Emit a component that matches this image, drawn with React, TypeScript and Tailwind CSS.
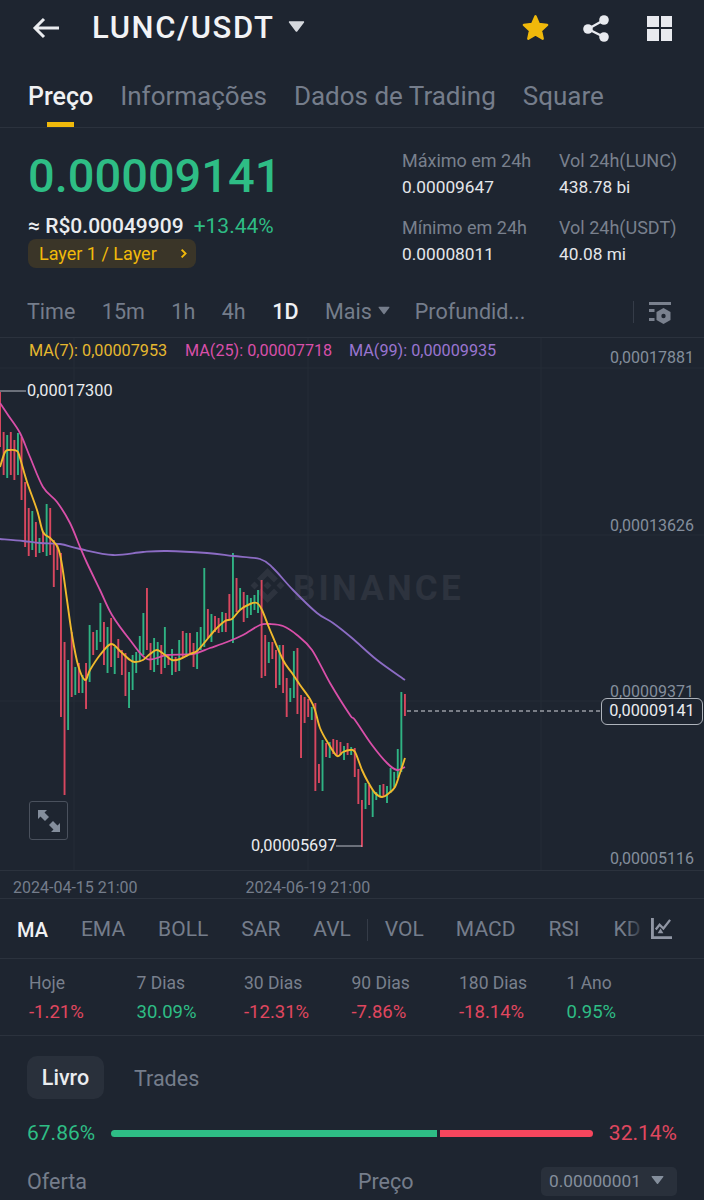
import React from 'react';

// [top, bottom, up]
const candles: [number, number, number][] = [
  [392, 447, 0], [432, 475, 0], [435, 478, 1], [432, 475, 0], [440, 480, 0], [433, 475, 1], [437, 500, 0], [482, 547, 0],
  [508, 556, 0], [511, 550, 1], [522, 557, 0], [538, 553, 1], [532, 552, 0], [504, 556, 1], [508, 555, 0], [540, 587, 0],
  [543, 570, 0], [553, 717, 0], [642, 795, 0], [660, 730, 1], [632, 697, 0], [667, 695, 1], [663, 693, 0], [675, 693, 1],
  [663, 709, 0], [625, 682, 1], [632, 655, 0], [630, 650, 1], [603, 642, 1], [622, 665, 0], [627, 673, 1], [618, 667, 0],
  [647, 674, 1], [639, 658, 0], [650, 675, 0], [653, 696, 0], [672, 708, 1], [655, 690, 1], [652, 673, 1], [636, 662, 1],
  [613, 655, 1], [588, 650, 0], [643, 670, 0], [638, 672, 1], [642, 665, 1], [645, 674, 0], [627, 668, 1], [655, 665, 0],
  [649, 675, 1], [657, 672, 0], [640, 671, 1], [631, 658, 0], [633, 657, 1], [633, 655, 0], [643, 667, 0], [632, 669, 1],
  [627, 650, 1], [568, 647, 1], [609, 638, 0], [614, 642, 1], [616, 632, 0], [618, 633, 0], [612, 632, 1], [613, 632, 0],
  [594, 620, 0], [553, 643, 1], [578, 612, 0], [588, 610, 1], [592, 622, 0], [595, 618, 1], [598, 615, 1], [595, 610, 1],
  [590, 613, 1], [580, 678, 0], [635, 676, 0], [642, 663, 1], [642, 659, 0], [650, 688, 0], [645, 685, 1], [645, 693, 0],
  [678, 717, 0], [688, 702, 1], [651, 698, 1], [648, 714, 0], [695, 758, 0], [697, 723, 0], [699, 717, 0], [707, 720, 1],
  [703, 791, 0], [764, 783, 0], [740, 791, 1], [743, 757, 0], [742, 758, 1], [739, 754, 0], [740, 756, 0], [742, 755, 0],
  [746, 760, 1], [743, 755, 0], [747, 755, 1], [748, 777, 0], [769, 804, 0], [800, 847, 0], [783, 809, 1], [785, 805, 0],
  [790, 817, 1], [792, 800, 1], [785, 797, 1], [784, 797, 0], [786, 803, 1], [768, 793, 1], [772, 787, 1], [749, 778, 1],
  [692, 772, 1], [694, 716, 0],
];

const ma7 = '0,467 5,452 9,450 17,451 20,458 27,482 37,510 43,532 50,538 58,548 62,565 67,600 72,635 78,665 85,680 90,670 100,655 111,644 120,651 130,660 135,662 143,660 150,654 157,650 165,655 172,660 180,659 190,654 197,651 205,642 215,630 225,621 232,619 240,610 250,604 257,603 262,610 270,630 283,660 292,673 300,685 310,699 315,710 320,728 328,743 337,756 343,752 350,750 355,752 362,770 368,782 375,793 382,797 388,794 395,787 400,773 405,758';
const ma25 = '0,403 8,415 20,433 30,457 43,487 57,502 70,523 80,547 87,563 100,590 112,615 130,640 147,659 167,655 193,654 210,648 227,642 243,635 260,625 270,624 283,626 297,635 312,650 330,683 350,715 355,720 372,745 387,763 397,770 405,767';
const ma99 = '0,539 23,541 40,543 60,544 80,549 113,555 143,552 167,551 207,553 233,556 260,559 273,568 293,590 317,613 333,623 352,638 377,660 405,680';

// catmull-rom through the points so the averages don't look angular
const smooth = (pts: string) => {
  const p = pts.split(' ').map((s) => s.split(',').map(Number));
  let d = `M${p[0][0]} ${p[0][1]}`;
  for (let i = 0; i < p.length - 1; i++) {
    const a = p[i - 1] || p[i];
    const b = p[i];
    const c = p[i + 1];
    const e = p[i + 2] || c;
    d += `C${b[0] + (c[0] - a[0]) / 6} ${b[1] + (c[1] - a[1]) / 6} ${c[0] - (e[0] - b[0]) / 6} ${c[1] - (e[1] - b[1]) / 6} ${c[0]} ${c[1]}`;
  }
  return d;
};

const timeTabs = ['Time', '15m', '1h', '4h', '1D', 'Mais', 'Profundid...'];
const indicators = ['EMA', 'BOLL', 'SAR', 'AVL'];
const perf = [
  { label: 'Hoje', value: '-1.21%', up: false },
  { label: '7 Dias', value: '30.09%', up: true },
  { label: '30 Dias', value: '-12.31%', up: false },
  { label: '90 Dias', value: '-7.86%', up: false },
  { label: '180 Dias', value: '-18.14%', up: false },
  { label: '1 Ano', value: '0.95%', up: true },
];

const Caret = ({ className }: { className: string }) => (
  <svg viewBox="0 0 16 12" className={className} fill="currentColor">
    <path d="M1.5 1h13c.6 0 1 .7.6 1.2L8.7 10.6c-.3.5-1.1.5-1.4 0L.9 2.2C.5 1.7.9 1 1.5 1z" />
  </svg>
);

const Stat = ({ label, value }: { label: string; value: string }) => (
  <div className="flex flex-col">
    <span className="text-[18px] leading-[26px] text-[#79808d]">{label}</span>
    <span className="text-[17.3px] leading-[26px] text-[#e4e6ea]">{value}</span>
  </div>
);

export default function App() {
  return (
    <div className="w-[704px] h-[1200px] overflow-hidden bg-[#1e2530] text-[#848e9c] font-['Roboto',sans-serif]">
      {/* top bar */}
      <div className="h-[56px] flex items-center pl-[32px] pr-[32px]">
        <svg viewBox="0 0 28 24" className="w-[28px] h-[24px] text-[#eaecef]" fill="none" stroke="currentColor" strokeWidth="3">
          <path d="M27 12H3M12 3l-9 9 9 9" />
        </svg>
        <span className="ml-[32px] text-[31px] tracking-[1.6px] font-medium text-[#f2f3f5]">LUNC/USDT</span>
        <Caret className="ml-[13px] mb-[4px] w-[17px] h-[13px] text-[#d5d8dd]" />
        <svg viewBox="0 0 24 24" className="ml-auto w-[29px] h-[28px] text-[#f0b90b]" fill="currentColor" stroke="currentColor" strokeWidth="2" strokeLinejoin="round">
          <path d="M12 2l2.9 6.6 7.1.8-5.3 4.8 1.5 7L12 17.6l-6.2 3.6 1.5-7L2 9.4l7.1-.8z" />
        </svg>
        <svg viewBox="0 0 26 27" className="ml-[33px] w-[26px] h-[27px] text-[#e8eaef]" fill="currentColor">
          <circle cx="21" cy="5" r="4.8" />
          <circle cx="5" cy="14" r="4.8" />
          <circle cx="21" cy="22" r="4.8" />
          <path d="M5 14l16-9M5 14l16 8" stroke="currentColor" strokeWidth="2.4" />
        </svg>
        <div className="ml-[38px] grid grid-cols-2 gap-[2px] w-[25px] h-[25px]">
          <div className="bg-[#e8eaef]" />
          <div className="bg-[#e8eaef]" />
          <div className="bg-[#e8eaef]" />
          <div className="bg-[#e8eaef]" />
        </div>
      </div>

      {/* page tabs */}
      <div className="h-[72px] border-b border-[#2b323d] flex items-start pt-[23px] pl-[28px] gap-[27px] text-[26px] leading-[34px] text-[#757d8b]">
        <div className="relative h-[48px]">
          <span className="text-[25px] font-medium text-[#f0f1f3]">Preço</span>
          <div className="absolute left-[19px] bottom-0 w-[27px] h-[5px] bg-[#f0b90b]" />
        </div>
        <span>Informações</span>
        <span>Dados de Trading</span>
        <span>Square</span>
      </div>

      {/* price block */}
      <div className="h-[163px] flex pl-[28px] pt-[20px]">
        <div className="w-[374px]">
          <div className="text-[47px] leading-[56px] font-medium text-[#2ebd85]">0.00009141</div>
          <div className="mt-[8px] flex items-center text-[21px] leading-[28px]">
            <span className="font-medium text-[#eaecef]">≈ R$0.00049909</span>
            <span className="ml-[10px] text-[#2ebd85]">+13.44%</span>
          </div>
          <div className="-mt-[1px] w-[168px] h-[29px] rounded-[8px] bg-[#3a3528] flex items-center pl-[11px] pr-[8px] text-[18px] text-[#f0b90b]">
            <span>Layer 1 / Layer</span>
            <svg viewBox="0 0 10 14" className="ml-auto w-[8px] h-[11px]" fill="none" stroke="currentColor" strokeWidth="2.4">
              <path d="M2 2l5 5-5 5" />
            </svg>
          </div>
        </div>
        <div className="w-[157px] flex flex-col gap-[15px]">
          <Stat label="Máximo em 24h" value="0.00009647" />
          <Stat label="Mínimo em 24h" value="0.00008011" />
        </div>
        <div className="flex flex-col gap-[15px]">
          <Stat label="Vol 24h(LUNC)" value="438.78 bi" />
          <Stat label="Vol 24h(USDT)" value="40.08 mi" />
        </div>
      </div>

      {/* interval row */}
      <div className="h-[47px] border-b border-[#2b323d] flex items-center pb-[4px] pl-[27px] pr-[33px] text-[21.5px] text-[#757d8b]">
        {timeTabs.map((t, i) => (
          <React.Fragment key={t}>
            <span className={t === '1D' ? 'font-medium text-[#f0f1f3]' : ''} style={{ marginLeft: i === 0 ? 0 : t === 'Profundid...' ? 25 : 26.5 }}>
              {t}
            </span>
            {t === 'Mais' && <Caret className="ml-[6px] mb-[3px] w-[12px] h-[9px]" />}
          </React.Fragment>
        ))}
        <div className="ml-auto w-px h-[22px] bg-[#353c48]" />
        <svg viewBox="0 0 22 23" className="ml-[15px] w-[22px] h-[23px] text-[#7a818e]" fill="currentColor">
          <rect x="0" y="1" width="22" height="3" />
          <rect x="0" y="8" width="5.5" height="3" />
          <rect x="0" y="17" width="5.5" height="3" />
          <path d="M14.5 7l7 4v8l-7 4-7-4v-8z" />
          <circle cx="14.5" cy="15" r="2.2" fill="#1e2530" />
        </svg>
      </div>

      {/* chart, svg coords follow page y via the viewBox */}
      <div className="relative h-[532px]">
        <div className="absolute left-[293px] top-[231px] text-[35px] leading-[40px] font-bold tracking-[3.2px] text-[#2d333e]">BINANCE</div>
        <svg viewBox="0 338 704 532" className="absolute inset-0 w-[704px] h-[532px]">
          <path d="M0 368H704M0 535H704M0 701H704M74 338V870M308 338V870M541 338V870" stroke="#252c37" strokeWidth="1" />
          <g transform="translate(250 568)" fill="#2d333e">
            <path d="M17.5 0L28 10.5l-4 4L17.5 8 11 14.5l-4-4zM4.5 13.5l4 4-4 4-4-4zM30.5 13.5l4 4-4 4-4-4zM17.5 13.5l4 4-4 4-4-4zM17.5 35L7 24.5l4-4 6.5 6.5 6.5-6.5 4 4z" />
          </g>
          {candles.map(([top, bottom, up], i) => (
            <rect key={i} x={i * 3.583 - 0.9} y={top} width={1.9} height={bottom - top} fill={up ? '#2fb383' : '#d8475f'} />
          ))}
          <path d={smooth(ma99)} fill="none" stroke="#8c6cc4" strokeWidth="1.8" />
          <path d={smooth(ma25)} fill="none" stroke="#d94fa9" strokeWidth="1.8" />
          <path d={smooth(ma7)} fill="none" stroke="#f0b92d" strokeWidth="1.9" />
          <path d="M0 391H26M336 846H362" stroke="#b9bdc5" strokeWidth="1" />
          <path d="M407 711H600" stroke="#d5d8dd" strokeWidth="1" strokeDasharray="4 3" />
        </svg>

        <div className="absolute left-[29px] top-[4px] text-[16.2px] leading-[18px] text-[#e6b82f]">MA(7): 0,00007953</div>
        <div className="absolute left-[185px] top-[4px] text-[16.2px] leading-[18px] text-[#d94fa9]">MA(25): 0,00007718</div>
        <div className="absolute left-[349px] top-[4px] text-[16.2px] leading-[18px] text-[#9a75d0]">MA(99): 0,00009935</div>

        <div className="absolute right-[10px] top-[11px] text-[16px] leading-[18px]">0,00017881</div>
        <div className="absolute right-[10px] top-[179px] text-[16px] leading-[18px]">0,00013626</div>
        <div className="absolute right-[10px] top-[345px] text-[16px] leading-[18px]">0,00009371</div>
        <div className="absolute right-[10px] top-[512px] text-[16px] leading-[18px]">0,00005116</div>

        <div className="absolute left-[27px] top-[44px] text-[16.3px] leading-[18px] text-[#eaecef]">0,00017300</div>
        <div className="absolute left-[251px] top-[499px] text-[16.3px] leading-[18px] text-[#eaecef]">0,00005697</div>

        <div className="absolute left-[601px] top-[360px] w-[102px] h-[27px] rounded-[6px] border border-[#aeb3bb] bg-[#1e2530] flex items-center justify-center text-[16.3px] text-[#eaecef]">
          0,00009141
        </div>

        <div className="absolute left-[29px] top-[463px] w-[39px] h-[39px] rounded-[3px] border border-[#4a515d] flex items-center justify-center">
          <svg viewBox="0 0 24 24" className="w-[24px] h-[24px] text-[#848e9c]" fill="currentColor">
            <path d="M1 1h9L7.5 3.5 12 8l-4 4-4.5-4.5L1 10zM23 23h-9l2.5-2.5L12 16l4-4 4.5 4.5L23 14z" />
          </svg>
        </div>
      </div>

      {/* date axis */}
      <div className="h-[29px] border-y border-[#2b323d] flex items-center pt-[7px] pl-[13px] text-[16px] text-[#757d8b]">
        <span>2024-04-15 21:00</span>
        <span className="ml-[108px]">2024-06-19 21:00</span>
      </div>

      {/* indicator row */}
      <div className="relative h-[60px] border-b border-[#2b323d] flex items-center pt-[3px] pl-[17px] text-[21px] text-[#757d8b] overflow-hidden">
        <span className="text-[20px] font-medium text-[#f0f1f3]">MA</span>
        {indicators.map((t) => (
          <span key={t} className="ml-[33px]">{t}</span>
        ))}
        <div className="ml-[16px] w-px h-[22px] bg-[#353c48]" />
        <span className="ml-[17px]">VOL</span>
        <span className="ml-[32px]">MACD</span>
        <span className="ml-[33px]">RSI</span>
        <span className="ml-[34px]">KD</span>
        <div className="absolute left-[626px] top-0 h-full w-[20px] bg-gradient-to-r from-transparent to-[#1e2530]" />
        <div className="absolute right-0 top-0 h-full w-[58px] bg-[#1e2530] flex items-center pl-[5px]">
          <svg viewBox="0 0 22 22" className="w-[21px] h-[21px] text-[#9096a4]" fill="none" stroke="currentColor" strokeWidth="3">
            <path d="M1.5 0v20.5H22" />
            <path d="M5 12l4-5 4 4 7-9" strokeWidth="2.4" />
            <path d="M7 16h6l-3-5z" fill="currentColor" stroke="none" />
          </svg>
        </div>
      </div>

      {/* performance */}
      <div className="h-[77px] border-b border-[#2b323d] grid grid-cols-6 pl-[29px] pr-[30px] pt-[10px] text-[17.5px] leading-[29px]">
        {perf.map((p) => (
          <div key={p.label} className="flex flex-col">
            <span className="text-[#79808d]">{p.label}</span>
            <span className={p.up ? 'text-[18.5px] text-[#2ebd85]' : 'text-[18.5px] text-[#e0475f]'}>{p.value}</span>
          </div>
        ))}
      </div>

      {/* book */}
      <div className="pt-[20px] pl-[27px] pr-[27px]">
        <div className="flex items-center text-[21.5px]">
          <div className="w-[77px] h-[43px] pt-[2px] rounded-[10px] bg-[#29303b] flex items-center justify-center font-medium text-[#eaecef]">Livro</div>
          <span className="ml-[30px] pt-[3px] text-[#757d8b]">Trades</span>
        </div>
        <div className="mt-[20px] flex items-center text-[21px] leading-[28px]">
          <span className="text-[#2ebd85]">67.86%</span>
          <div className="ml-[16px] flex gap-[3px] h-[7px] w-[482px]">
            <div className="w-[326px] rounded-l-full bg-[#2ebd85]" />
            <div className="flex-1 rounded-r-full bg-[#f6465d]" />
          </div>
          <span className="ml-auto text-[#e0475f]">32.14%</span>
        </div>
        <div className="mt-[20px] flex items-center text-[21.5px] leading-[29px]">
          <span className="text-[#757d8b]">Oferta</span>
          <span className="ml-[271px] text-[#757d8b]">Preço</span>
          <div className="ml-auto w-[136px] h-[29px] rounded-[5px] bg-[#29303b] flex items-center pl-[8px] text-[17.3px] text-[#848e9c]">
            <span>0.00000001</span>
            <Caret className="ml-[10px] mb-[3px] w-[13px] h-[10px]" />
          </div>
        </div>
      </div>
    </div>
  );
}
